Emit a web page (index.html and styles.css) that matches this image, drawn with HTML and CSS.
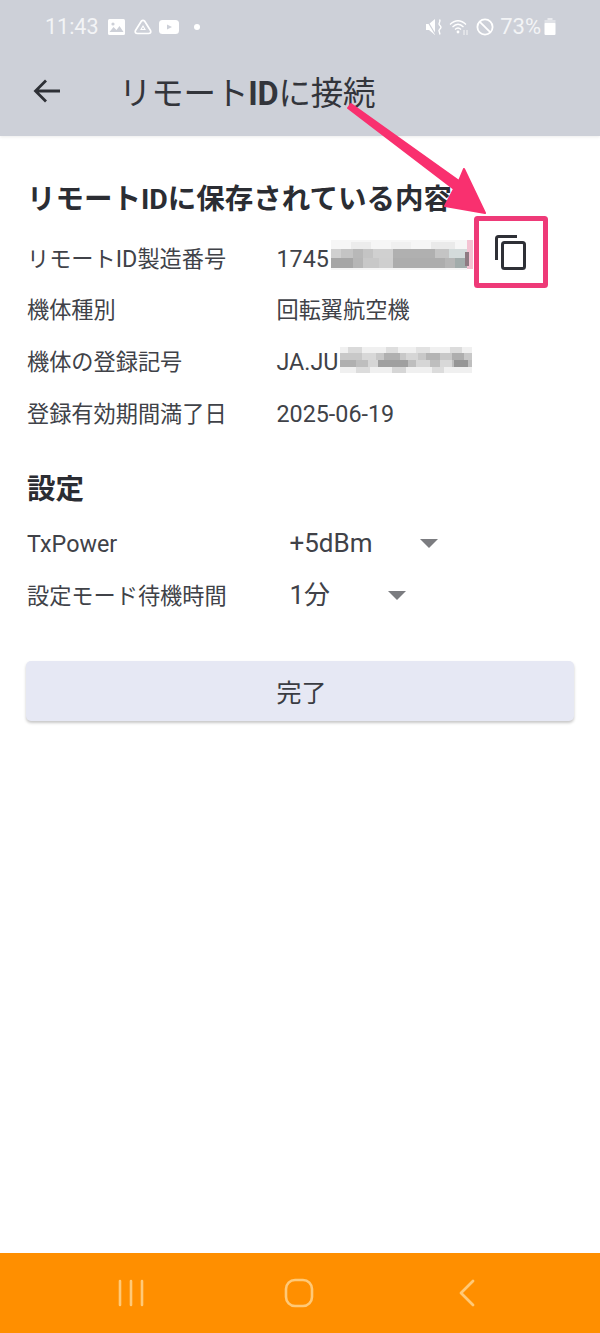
FILE: index.html
```html
<!DOCTYPE html>
<html lang="ja">
<head>
<meta charset="utf-8">
<title>リモートIDに接続</title>
<link rel="stylesheet" href="styles.css">
</head>
<body>
<div class="screen">
  <header class="top">
    <div class="status">
      <div class="status-left">
        <span class="clock">11:43</span>
        <svg class="ic" width="17" height="16" viewBox="0 0 17 16"><rect x="0" y="0" width="17" height="16" rx="1.500" fill="#fff"/><path d="M1.500 13l4-5 3 3 3-4 4 6z" fill="#cdd0d8"/><circle cx="5" cy="5" r="1.600" fill="#cdd0d8"/></svg>
        <svg class="ic ic-drive" width="18" height="16" viewBox="0 0 18 16"><path d="M7.300 2.200Q9 .6 10.700 2.200L16.500 11.500Q17.500 14.500 14.500 14.500H3.500Q.5 14.500 1.500 11.500Z" fill="none" stroke="#fff" stroke-width="1.700" stroke-linejoin="round"/><path d="M9 7L11 10.500H7z" fill="none" stroke="#fff" stroke-width="1.100"/></svg>
        <svg class="ic" width="20" height="14" viewBox="0 0 20 14"><rect width="20" height="14" rx="3.500" fill="#fff"/><path d="M8 4.500l5 2.500-5 2.500z" fill="#cdd0d8"/></svg>
        <span class="dot"></span>
      </div>
      <div class="status-right">
        <svg width="18" height="18" viewBox="0 0 18 18"><path d="M1 6h3l6-5v16l-6-5H1z" fill="#fff"/><path d="M1.500 1.500l9 15" stroke="#cdd0d8" stroke-width="1.200"/><path d="M14.500 1.500c2 2.500-2 3.500 0 5.500s2 2.500 0 4.500 1.500 3 0 5" fill="none" stroke="#fff" stroke-width="1.400"/></svg>
        <svg width="21" height="18" viewBox="0 0 21 18"><g fill="none" stroke="#fff" stroke-width="1.300"><path d="M1 6.500c5-5 11-5 16 0"/><path d="M3.500 9c3.500-3.500 7.500-3.500 11 0"/><path d="M6 11.500c2-2 4-2 6 0"/></g><circle cx="9" cy="14" r="1.400" fill="#fff"/><path d="M15 12v5M18 12v5" stroke="#fff" stroke-width=".8"/></svg>
        <svg width="18" height="18" viewBox="0 0 18 18"><circle cx="9" cy="9" r="7.600" fill="none" stroke="#fff" stroke-width="1.800"/><path d="M3.800 3.800l10.400 10.400" stroke="#fff" stroke-width="1.800"/></svg>
        <span class="pct">73%</span>
        <svg width="12" height="17" viewBox="0 0 12 17"><rect x="3.500" y="0" width="5" height="2" fill="#e9eaee"/><rect x="0.500" y="2" width="11" height="4" fill="#e0e2e7"/><rect x="0.500" y="5" width="11" height="12" rx="1" fill="#fff"/></svg>
      </div>
    </div>
    <div class="appbar">
      <svg class="back" width="28" height="26" viewBox="0 0 28 26"><path d="M27 13H3M13 2.500L2.500 13 13 23.500" fill="none" stroke="#2e3036" stroke-width="2.800"/></svg>
      <h1 class="title">リモート<b>ID</b>に接続</h1>
    </div>
  </header>

  <main class="content">
    <h2 class="heading">リモートIDに保存されている内容</h2>
    <dl class="info">
      <div class="row"><dt>リモート<span class="lat">ID</span>製造番号</dt><dd><span class="lat">1745</span>
        <svg class="mosaic mosaic-serial" width="142" height="30" viewBox="0 0 142 30">
          <rect width="136" height="30" fill="#f6f6f6"/>
          <rect x="136" width="6" height="29" fill="#f4c3d3"/>
          <g><rect x="20" y="2" width="20" height="8" fill="#ececec"/><rect x="60" y="2" width="20" height="8" fill="#f0f0f0"/><rect x="100" y="2" width="24" height="8" fill="#eaeaea"/></g>
          <g><rect y="9" width="136" height="9" fill="#c4c4c4"/><rect x="0" y="9" width="10" height="9" fill="#d0d0d0"/><rect x="22" y="9" width="10" height="9" fill="#b8b8b8"/><rect x="42" y="9" width="20" height="9" fill="#d0d0d0"/><rect x="62" y="9" width="42" height="9" fill="#b0b0b0"/><rect x="118" y="9" width="18" height="9" fill="#d4dbdb"/></g>
          <g><rect y="18" width="136" height="10" fill="#b6b6b6"/><rect x="0" y="18" width="22" height="10" fill="#a6a6a6"/><rect x="32" y="18" width="16" height="10" fill="#c8c8c8"/><rect x="48" y="18" width="14" height="10" fill="#cfcfcf"/><rect x="62" y="18" width="52" height="10" fill="#adadad"/><rect x="124" y="18" width="12" height="10" fill="#a2acab"/></g>
          <rect x="134" y="12" width="4" height="14" fill="#8f7a82"/>
        </svg></dd></div>
      <div class="row"><dt>機体種別</dt><dd>回転翼航空機</dd></div>
      <div class="row"><dt>機体の登録記号</dt><dd><span class="lat">JA.JU</span>
        <svg class="mosaic mosaic-reg" width="132" height="26" viewBox="0 0 132 26">
          <rect width="132" height="26" fill="#f0f0f0"/>
          <rect x="8" width="14" height="6" fill="#dadada"/><rect x="46" width="12" height="6" fill="#dedede"/><rect x="76" width="14" height="6" fill="#e2e2e2"/><rect x="110" width="12" height="6" fill="#dcdcdc"/>
          <rect y="6" width="132" height="7" fill="#c8c8c8"/><rect x="22" y="6" width="14" height="7" fill="#d8d8d8"/><rect x="44" y="6" width="16" height="7" fill="#b0b0b0"/><rect x="66" y="6" width="12" height="7" fill="#d6d6d6"/><rect x="86" y="6" width="14" height="7" fill="#b4b4b4"/><rect x="112" y="6" width="12" height="7" fill="#aeaeae"/>
          <rect y="13" width="132" height="7" fill="#bebebe"/><rect x="0" y="13" width="16" height="7" fill="#b0b0b0"/><rect x="28" y="13" width="10" height="7" fill="#d6d6d6"/><rect x="38" y="13" width="30" height="7" fill="#a0a0a0"/><rect x="76" y="13" width="14" height="7" fill="#d6d6d6"/><rect x="100" y="13" width="12" height="7" fill="#d8d8d8"/><rect x="114" y="13" width="14" height="7" fill="#969696"/>
          <rect x="16" y="20" width="14" height="6" fill="#dcdcdc"/><rect x="52" y="20" width="14" height="6" fill="#d6d6d6"/><rect x="92" y="20" width="12" height="6" fill="#dcdcdc"/>
        </svg></dd></div>
      <div class="row"><dt>登録有効期間満了日</dt><dd><span class="lat">2025-06-19</span></dd></div>
    </dl>

    <h2 class="heading heading-settings">設定</h2>
    <div class="settings">
      <div class="row select-row"><span class="label lat">TxPower</span><span class="select select-power"><span class="select-value">+5dBm</span><i class="caret"></i></span></div>
      <div class="row select-row"><span class="label">設定モード待機時間</span><span class="select select-wait"><span class="select-value">1分</span><i class="caret"></i></span></div>
    </div>
    <button class="done">完了</button>
  </main>

  <nav class="navbar">
    <svg width="28" height="28" viewBox="0 0 28 28"><path d="M3 2v24M14 2v24M25 2v24" stroke="#ffc977" stroke-width="2.600" stroke-linecap="round"/></svg>
    <svg width="30" height="30" viewBox="0 0 30 30"><rect x="2" y="2" width="26" height="26" rx="9" fill="none" stroke="#ffc977" stroke-width="2.600"/></svg>
    <svg width="18" height="28" viewBox="0 0 18 28"><path d="M15 2L3 14l12 12" fill="none" stroke="#ffc977" stroke-width="2.800" stroke-linecap="round" stroke-linejoin="round"/></svg>
  </nav>

  <svg class="callout" width="600" height="300" viewBox="0 0 600 300">
    <path d="M351 104L348 108L454 189L445 206L485 213L464 169L459 181Z" fill="#f9306f" stroke="#f9306f" stroke-width="2" stroke-linejoin="round"/>
    <rect x="476.500" y="218.500" width="69" height="67" rx="1" fill="none" stroke="#ee3a78" stroke-width="5"/>
    <g fill="none" stroke="#2e3036" stroke-width="3">
      <path d="M517 236.500H498.500a2 2 0 0 0-2 2V260"/>
      <rect x="502.500" y="242.500" width="22" height="26" rx="2"/>
    </g>
  </svg>
</div>
</body>
</html>
```

FILE: styles.css
```css
* { box-sizing: border-box; }
html, body { margin: 0; padding: 0; background: #fff; }
body { font-family: Roboto, "Noto Sans CJK JP", sans-serif; color: #3a3c42; }
.screen { position: relative; width: 600px; height: 1333px; display: flex; flex-direction: column; overflow: hidden; }

.top { height: 136px; background: #cdd0d8; flex: none; box-shadow: 0 1px 3px rgba(0,0,0,.08); }
.status { height: 53px; display: flex; align-items: center; justify-content: space-between; padding: 0 44px 0 45px; color: #fff; }
.status-left, .status-right { display: flex; align-items: center; }
.status-left { gap: 9px; }
.clock { font-size: 21.500px; color: #f3f4f6; }
.ic { display: block; }
.ic-drive { margin-right: -2px; }
.dot { width: 6px; height: 6px; border-radius: 50%; background: #fff; margin-left: 6px; }
.status-right { gap: 6px; }
.pct { font-size: 22px; color: #f3f4f6; margin-right: -3px; }

.appbar { height: 75px; display: flex; align-items: center; padding-left: 33px; }
.back { display: block; }
.title { margin: 0 0 0 58px; font-size: 32.500px; font-weight: 400; color: #33353b; letter-spacing: -.2px; white-space: nowrap; }
.title b { font-weight: 700; }

.content { flex: 1; padding: 45px 26px 0 27px; }
.heading { margin: 0; font-size: 28.500px; line-height: 38px; font-weight: 700; color: #2b2d33; }
.info { margin: 11px 0 0; }
.row { display: flex; align-items: baseline; height: 51.700px; padding-top: 13.500px; line-height: 30px; font-size: 22.200px; color: #404248; }
.lat { font-size: 23.300px; }
dt { width: 249.500px; flex: none; }
dd { margin: 0; position: relative; white-space: nowrap; }
.mosaic { display: block; position: absolute; filter: blur(.7px); }
.mosaic-serial { left: 54px; top: -4px; }
.mosaic-reg { left: 63px; top: 0; }
.heading-settings { margin-top: 34px; }
.settings { margin-top: 6px; }
.select-row { height: 52px; }
.label { width: 262.500px; flex: none; }
.select { display: flex; align-items: center; font-size: 26px; }
.select-power { gap: 47px; }
.select-wait { gap: 58px; }
.caret { width: 0; height: 0; border-left: 9px solid transparent; border-right: 9px solid transparent; border-top: 9px solid #7b7c80; }

.done { display: block; width: 548px; height: 60px; margin: 42px 0 0 -1px; padding: 0 0 0 3px; border: 0; border-radius: 5px; background: #e6e8f4; color: #3a3c42; font: inherit; font-size: 25px; box-shadow: 0 2px 3px rgba(0,0,0,.22); }

.navbar { height: 80px; flex: none; background: #ff8f00; display: grid; grid-template-columns: repeat(3, 168px); justify-content: center; align-items: center; justify-items: center; padding-right: 2px; }

.callout { position: absolute; left: 0; top: 0; pointer-events: none; }
```
